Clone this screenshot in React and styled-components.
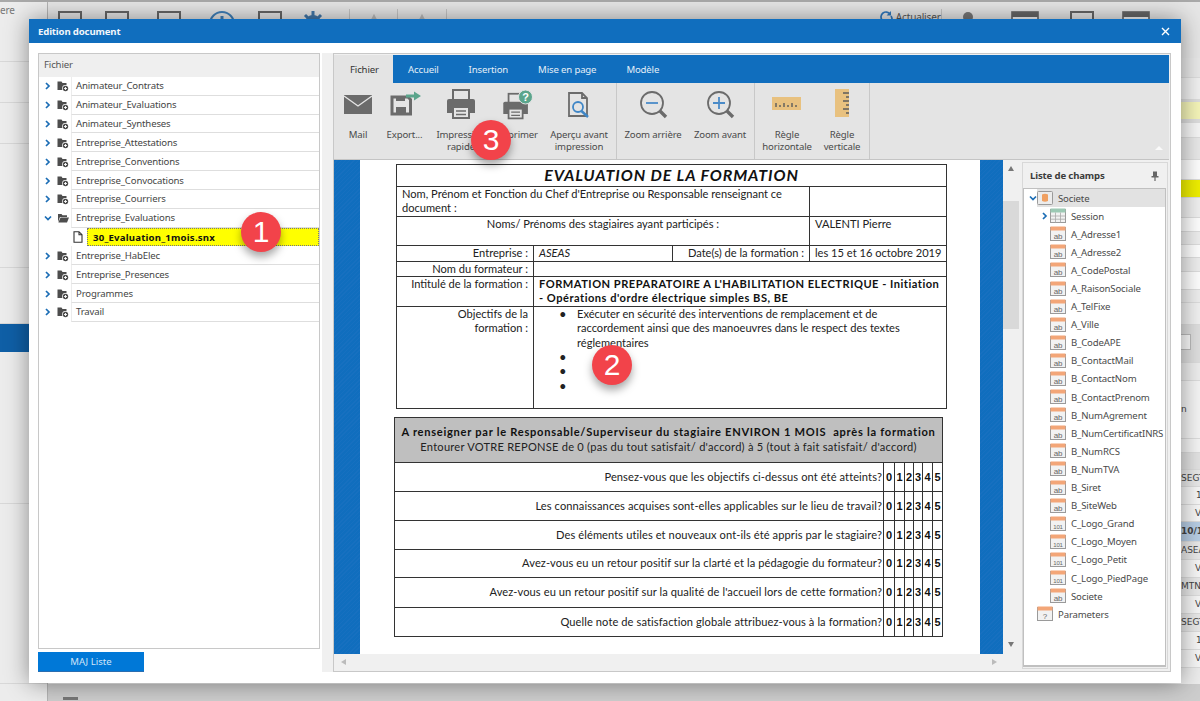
import React from "react"
import styled, { createGlobalStyle } from "styled-components"

const GlobalStyle = createGlobalStyle`
  html, body {
    margin: 0;
    padding: 0;
    background: #ececec;
    overflow: hidden;
  }
  * { box-sizing: border-box; }
`

const UI_FONT = `"Noto Sans", "Liberation Sans", sans-serif`
const DOC_FONT = `"Lato", "Open Sans", sans-serif`
const GREY = "#6b6b6b"

// ---- application behind the dialog
const Page = styled.div`
  position: relative;
  width: 1200px;
  height: 701px;
  overflow: hidden;
  background: #ececec;
  font-family: ${UI_FONT};
  font-size: 9.6px;
  letter-spacing: -0.15px;
  color: #444;
`
const TopLine = styled.div`
  height: 2px;
  background: #a9a9a9;
`
const Shell = styled.div`
  display: flex;
  height: 699px;
`
const SideBar = styled.div`
  width: 48px;
  flex-shrink: 0;
  border-right: 1px solid #b4b4b4;
  display: flex;
  flex-direction: column;
`
const SideRow = styled.div`
  height: ${p => p.$h}px;
  flex-shrink: 0;
  background: ${p => p.$bg || "transparent"};
  border-bottom: ${p => (p.$bg ? "0" : "1px solid #d8d8d8")};
  padding-top: 1px;
  color: #777;
  font-size: 10px;
`
const BackMain = styled.div`
  flex: 1;
  display: flex;
  flex-direction: column;
`
const TopTools = styled.div`
  height: 56px;
  flex-shrink: 0;
  display: flex;
  background: #e6e6e6;
  padding-top: 7px;
`
const ToolSlot = styled.div`
  width: ${p => p.$w}px;
  flex-shrink: 0;
  display: flex;
  justify-content: center;
  height: 30px;
  border-right: ${p => (p.$sep ? "1px solid #c4c4c4" : "0")};
  font-size: 10px;
  line-height: 16px;
  color: #555;
`
const Mid = styled.div`
  flex: 1;
  display: flex;
  justify-content: flex-end;
`
const RightRows = styled.div`
  width: 19px;
  display: flex;
  flex-direction: column;
  overflow: hidden;
`
const RightRow = styled.div`
  height: ${p => p.$h}px;
  flex-shrink: 0;
  background: ${p => p.$bg};
  border-bottom: 1px solid #dcdcdc;
  font-family: "DejaVu Sans", sans-serif;
  font-size: 9px;
  letter-spacing: 0;
  font-weight: ${p => (p.$bold ? 700 : 400)};
  color: #444;
  white-space: nowrap;
  padding-left: ${p => p.$pad || 0}px;
  line-height: ${p => p.$h - 1}px;
`
const InputBox = styled.div`
  width: 10px;
  height: 16px;
  margin-top: 9px;
  background: #fafafa;
  border: 1px solid #bbb;
  border-left: 0;
`
const BottomStrip = styled.div`
  height: 17px;
  flex-shrink: 0;
  background: #cdcdcd;
  padding: 13px 0 0 15px;
`
const BottomDash = styled.div`
  width: 15px;
  height: 3px;
  background: #777;
`

// ---- dialog
const Dialog = styled.div`
  position: absolute;
  left: 29px;
  top: 19px;
  width: 1152px;
  height: 664px;
  background: #fff;
  box-shadow: 0 0 22px rgba(0, 0, 0, 0.42);
  display: flex;
  flex-direction: column;
`
const TitleBar = styled.div`
  height: 24px;
  flex-shrink: 0;
  background: #106ebe;
  color: #f2f6fb;
  font-weight: 700;
  display: flex;
  align-items: center;
  justify-content: space-between;
  padding: 0 11px 0 9px;
`
const DialogBody = styled.div`
  flex: 1;
  display: flex;
  padding: 10px 10px 11px 9px;
`
const LeftCol = styled.div`
  width: 282px;
  flex-shrink: 0;
  display: flex;
  flex-direction: column;
  gap: 3px;
`
const FilePanel = styled.div`
  height: 596px;
  border: 1px solid #c8c8c8;
  display: flex;
  flex-direction: column;
`
const PanelHead = styled.div`
  height: 23px;
  flex-shrink: 0;
  background: #efefef;
  padding: 0 0 2px 5px;
  display: flex;
  align-items: center;
  color: #555;
`
const FileRow = styled.div`
  height: 18.83px;
  flex-shrink: 0;
  display: flex;
  align-items: center;
`
const Twist = styled.div`
  width: 18px;
  padding-left: 5px;
  display: flex;
  flex-shrink: 0;
`
const FolderSlot = styled.div`
  width: 14px;
  flex-shrink: 0;
  display: flex;
`
const RowLabel = styled.div`
  flex: 1;
  height: 100%;
  display: flex;
  align-items: center;
  padding-left: 4px;
  border-left: 1px solid #ececec;
  border-bottom: 1px solid #dedede;
  color: #454545;
`
const FileSlot = styled.div`
  width: 48px;
  padding-left: 34px;
  flex-shrink: 0;
  display: flex;
`
const SelectedLabel = styled.div`
  flex: 1;
  height: 100%;
  display: flex;
  align-items: center;
  padding-left: 5px;
  background: #ffff00;
  border: 1px dotted #777;
  color: #111;
  font-weight: 700;
  letter-spacing: 0.2px;
`
const SmallButton = styled.button`
  width: 106px;
  height: 20px;
  border: 0;
  border-bottom: 1px solid #2a6db0;
  background: #0078d7;
  color: #cfe4f7;
  font-family: ${UI_FONT};
  font-size: 9.6px;
  padding: 0;
`
const Splitter = styled.div`
  width: 11px;
  margin-left: 2px;
  flex-shrink: 0;
  background: #f0f0f0;
`
const Designer = styled.div`
  flex: 1;
  border: 1px solid #c8c8c8;
  padding-top: 1px;
  display: flex;
  flex-direction: column;
  background: #f0f0f0;
  min-width: 0;
`
const TabStrip = styled.div`
  height: 28px;
  flex-shrink: 0;
  background: #106ebe;
  display: flex;
  margin-right: 1px;
`
const Tab = styled.div`
  padding: 0 15px 0 ${p => (p.$active ? 16 : 15)}px;
  display: flex;
  align-items: center;
  background: ${p => (p.$active ? "#e4e4e4" : "transparent")};
  color: ${p => (p.$active ? "#333" : "#e4eef8")};
  width: ${p => p.$w}px;
`
const Ribbon = styled.div`
  position: relative;
  height: 77px;
  flex-shrink: 0;
  background: #e4e4e4;
  border-bottom: 1px solid #c4c4c4;
  display: flex;
  margin-right: 1px;
`
const RibbonGroup = styled.div`
  display: flex;
  padding: 0 ${p => p.$end || 0}px 0 ${p => p.$start || 0}px;
  border-right: 1px solid #c8c8c8;
`
const RibbonButton = styled.div`
  width: ${p => p.$w}px;
  margin-right: ${p => p.$mr || 0}px;
  display: flex;
  flex-direction: column;
  align-items: center;
  padding-top: 5px;
  text-align: center;
  line-height: 12px;
  color: #4a4a4a;
  white-space: nowrap;
  svg { margin-bottom: 5px; flex-shrink: 0; }
`
const Collapse = styled.div`
  position: absolute;
  right: 6px;
  bottom: 9px;
  width: 0;
  height: 0;
  border-left: 4px solid transparent;
  border-right: 4px solid transparent;
  border-bottom: 4px solid #fafafa;
`
const DesignerBody = styled.div`
  flex: 1;
  display: flex;
  min-height: 0;
`
const DocColumn = styled.div`
  width: 685px;
  flex-shrink: 0;
  display: flex;
  flex-direction: column;
`
const DocRow = styled.div`
  height: 494px;
  display: flex;
  overflow: hidden;
`
const Hatch = styled.div`
  width: ${p => p.$w}px;
  flex-shrink: 0;
  background: repeating-linear-gradient(135deg, #106ebe 0 2px, #1770c0 2px 3px);
`
const Sheet = styled.div`
  width: 620px;
  flex-shrink: 0;
  background: #fff;
  padding: 4px 0 0 36px;
  font-family: ${DOC_FONT};
  font-size: 11.1px;
  letter-spacing: 0;
  color: #222;
  overflow: hidden;
`
const VScroll = styled.div`
  width: 16px;
  flex-shrink: 0;
  background: #f0f0f0;
  position: relative;
  display: flex;
  flex-direction: column;
  align-items: center;
`
const ScrollArrow = styled.div`
  width: 0;
  height: 0;
  margin-top: ${p => p.$top || 0}px;
  border-left: 3px solid transparent;
  border-right: 3px solid transparent;
  border-bottom: ${p => (p.$down ? "0" : "5px solid #777")};
  border-top: ${p => (p.$down ? "5px solid #777" : "0")};
`
const ScrollThumb = styled.div`
  width: 16px;
  height: 128px;
  margin-top: 30px;
  background: #d9d9d9;
`
const HScroll = styled.div`
  height: 16px;
  background: #f0f0f0;
  display: flex;
  align-items: center;
  justify-content: space-between;
  padding: 0 22px 0 7px;
`
const SideArrow = styled.div`
  width: 0;
  height: 0;
  border-top: 3px solid transparent;
  border-bottom: 3px solid transparent;
  border-left: ${p => (p.$right ? "5px solid #bbb" : "0")};
  border-right: ${p => (p.$right ? "0" : "5px solid #bbb")};
`

// ---- the report sheet
const DocTable = styled.table`
  width: ${p => p.$w}px;
  margin: ${p => p.$m || 0};
  table-layout: fixed;
  border-collapse: collapse;
  border: 1px solid #333;
`
const Td = styled.td`
  height: ${p => p.$h}px;
  padding: ${p => (p.$pad === undefined ? "0 5px" : p.$pad)};
  border: 1px solid #333;
  vertical-align: ${p => p.$v || "top"};
  text-align: ${p => p.$a || "left"};
  font-style: ${p => (p.$i ? "italic" : "normal")};
  line-height: ${p => p.$lh || 14.4}px;
  background: ${p => p.$bg || "transparent"};
  white-space: ${p => (p.$nw ? "nowrap" : "normal")};
`
const DocTitle = styled(Td)`
  font-size: 16px;
  letter-spacing: 0.9px;
  font-weight: 700;
  font-style: italic;
  color: #111;
  text-align: center;
  vertical-align: middle;
`
const Spaced = styled.span`
  letter-spacing: ${p => p.$ls}px;
  font-weight: ${p => (p.$b ? 700 : 400)};
  color: ${p => (p.$b ? "#111" : "inherit")};
`
const Bullets = styled.ul`
  margin: 0;
  padding: 0 0 0 38px;
  list-style: none;
  li {
    position: relative;
    min-height: 14.4px;
  }
  li::before {
    content: "•";
    position: absolute;
    left: -18px;
    font-size: 13px;
  }
`
const Digit = styled(Td)`
  font-family: "Liberation Sans", sans-serif;
  font-weight: 700;
  font-size: 11px;
  color: #111;
  text-align: center;
  vertical-align: middle;
`

// ---- field list
const FieldPanel = styled.div`
  width: 146px;
  flex-shrink: 0;
  margin: 2px 0 2px 3px;
  border: 1px solid #d8d8d8;
  background: #f0f0f0;
  display: flex;
  flex-direction: column;
  padding: 0 1px 1px 0;
`
const FieldHead = styled.div`
  height: 25px;
  flex-shrink: 0;
  display: flex;
  align-items: center;
  justify-content: space-between;
  padding: 0 7px;
  font-weight: 700;
  color: #3c3c3c;
`
const FieldTree = styled.div`
  flex: 1;
  background: #fff;
  border: 1px solid #c0c0c0;
  border-width: 1px 1px 2px 1px;
`
const FieldRow = styled.div`
  height: 18.1px;
  display: flex;
  align-items: center;
  padding-left: ${p => p.$indent}px;
  background: ${p => (p.$sel ? "linear-gradient(90deg, #fff 13px, #e2e2e2 13px)" : "transparent")};
  color: #4a4a4a;
  gap: 5px;
  white-space: nowrap;
  position: relative;
`
const RowTwist = styled.span`
  position: absolute;
  left: ${p => p.$x}px;
  display: flex;
`

// ---- numbered callouts
const Callout = styled.div`
  position: absolute;
  left: ${p => p.$x - 20}px;
  top: ${p => p.$y - 20}px;
  width: 40px;
  height: 40px;
  border-radius: 50%;
  background: #f2434a;
  color: #fff;
  font-family: "Liberation Sans", sans-serif;
  font-size: 30px;
  letter-spacing: 0;
  display: flex;
  align-items: center;
  justify-content: center;
  box-shadow: 0 5px 8px rgba(0, 0, 0, 0.35);
`

const Chevron = ({ open }) => (
  <svg width="8" height="8" viewBox="0 0 8 8">
    <path d={open ? "M1 2.5 L4 5.5 L7 2.5" : "M2 1 L5 4 L2 7"} fill="none" stroke="#1b6db5" strokeWidth="1.7" />
  </svg>
)

const FolderPlus = () => (
  <svg width="12" height="12" viewBox="0 0 12 12">
    <path d="M0.5 1.5 H4.5 L5.5 3 H9.5 V10 H0.5 Z" fill="#4d4d4d" />
    <circle cx="8.5" cy="8.5" r="3.4" fill="#fff" />
    <circle cx="8.5" cy="8.5" r="2.7" fill="#4d4d4d" />
    <path d="M7 8.5 H10 M8.5 7 V10" stroke="#fff" strokeWidth="0.9" />
  </svg>
)

const FolderOpen = () => (
  <svg width="12" height="12" viewBox="0 0 12 12">
    <path d="M1 2 H4.5 L5.5 3.2 H10 V5 H3 L1 10 Z" fill="#4d4d4d" />
    <path d="M3.5 5.6 H12 L10 10.4 H1.4 Z" fill="#4d4d4d" />
  </svg>
)

const FileIcon = () => (
  <svg width="10" height="12" viewBox="0 0 10 12">
    <path d="M1 0.7 H6 L9 3.7 V11.3 H1 Z M6 0.7 V3.7 H9" fill="#fff" stroke="#333" strokeWidth="1.1" />
  </svg>
)

const MailIcon = () => (
  <svg width="36" height="36" viewBox="0 0 36 36">
    <rect x="4" y="7" width="28" height="19" fill={GREY} />
    <path d="M4 8 L18 18 L32 8" fill="none" stroke="#e4e4e4" strokeWidth="1.4" />
  </svg>
)

const ExportIcon = () => (
  <svg width="36" height="36" viewBox="0 0 36 36">
    <path d="M5 9 H21 L23.5 11.5 V26 H5 Z" fill="none" stroke={GREY} strokeWidth="3" />
    <rect x="9" y="19" width="10" height="8" fill={GREY} />
    <rect x="9" y="8" width="9" height="5" fill={GREY} />
    <path d="M19 6.5 H27 V3.5 L34 8 L27 12.5 V9.5 H19 Z" fill="#5ba58c" />
  </svg>
)

const Printer = () => (
  <g>
    <rect x="12" y="2" width="16" height="11" fill="none" stroke={GREY} strokeWidth="2" />
    <path d="M8 11 H32 Q34 11 34 13 V25 H6 V13 Q6 11 8 11 Z" fill={GREY} />
    <rect x="12" y="19" width="16" height="11" fill="#e4e4e4" stroke={GREY} strokeWidth="2" />
    <path d="M15 23 H25 M15 26.5 H25" stroke={GREY} strokeWidth="1.4" />
  </g>
)

const PrintIcon = () => (
  <svg width="36" height="36" viewBox="0 0 36 36">
    <g transform="translate(-2 0)"><Printer /></g>
  </svg>
)

const PrintHelpIcon = () => (
  <svg width="36" height="36" viewBox="0 0 36 36">
    <g transform="translate(-1 4) scale(0.88)"><Printer /></g>
    <circle cx="26.5" cy="9" r="7" fill="#5ba58c" stroke="#e4e4e4" />
    <text x="26.5" y="13" textAnchor="middle" fontFamily="Liberation Sans" fontWeight="700" fontSize="11" fill="#fff">?</text>
  </svg>
)

const PreviewIcon = () => (
  <svg width="36" height="36" viewBox="0 0 36 36">
    <path d="M8 5 H21 L26 10 V28 H8 Z M21 5 V10 H26" fill="none" stroke={GREY} strokeWidth="1.8" />
    <circle cx="17" cy="19" r="5" fill="#e4e4e4" stroke="#3f86c6" strokeWidth="1.8" />
    <path d="M20.5 23 L27 29" stroke="#3f86c6" strokeWidth="2.4" />
  </svg>
)

const ZoomIcon = ({ plus }) => (
  <svg width="36" height="36" viewBox="0 0 36 36">
    <circle cx="17" cy="15" r="11" fill="none" stroke={GREY} strokeWidth="1.8" />
    <path d="M25 23 L31 29" stroke={GREY} strokeWidth="3.4" />
    <path d={plus ? "M11 15 H23 M17 9 V21" : "M11 15 H23"} stroke="#4a8bc8" strokeWidth="1.8" />
  </svg>
)

const RulerH = () => (
  <svg width="36" height="36" viewBox="0 0 36 36">
    <rect x="3" y="9" width="29" height="13" fill="#e8c17f" />
    <path d="M7 19 V15 M11 19 V17 M15 19 V15 M19 19 V17 M23 19 V15 M27 19 V17" stroke="#5c5c5c" strokeWidth="1.4" />
  </svg>
)

const RulerV = () => (
  <svg width="36" height="36" viewBox="0 0 36 36">
    <rect x="11" y="1" width="14" height="28" fill="#e8c17f" />
    <path d="M19 5 H25 M22 9 H25 M19 13 H25 M22 17 H25 M19 21 H25 M22 25 H25" stroke="#5c5c5c" strokeWidth="1.4" />
  </svg>
)

const FieldIcon = ({ label }) => (
  <svg width="16" height="16" viewBox="0 0 16 16">
    <rect x="0.5" y="1.5" width="15" height="13" fill="#f2f2f2" stroke="#9a9a9a" />
    <rect x="0.5" y="0.5" width="15" height="4" fill="#f3a678" />
    <text x="8" y="12.5" textAnchor="middle" fontFamily="Liberation Sans" fontSize={label.length > 2 ? 6 : 8} fill="#666">{label}</text>
  </svg>
)

const TableIcon = () => (
  <svg width="16" height="16" viewBox="0 0 16 16">
    <rect x="0.5" y="1.5" width="15" height="13" fill="#f2f2f2" stroke="#9a9a9a" />
    <rect x="0.5" y="0.5" width="15" height="4" fill="#9cc9b4" />
    <path d="M0.5 8 H15.5 M0.5 11.2 H15.5 M5.5 4.5 V14.5 M10.5 4.5 V14.5" stroke="#a8a8a8" strokeWidth="0.8" />
  </svg>
)

const SourceIcon = () => (
  <svg width="16" height="16" viewBox="0 0 16 16">
    <rect x="0.5" y="1.5" width="15" height="13" rx="1" fill="#ececec" stroke="#9a9a9a" />
    <path d="M5 4.5 Q8 3 11 4.5 V11 Q8 12.5 5 11 Z" fill="#f0a062" />
  </svg>
)

const PinIcon = () => (
  <svg width="8" height="10" viewBox="0 0 8 10">
    <path d="M2 0.5 H6 V5 H7.5 V6.5 H4.6 V10 H3.4 V6.5 H0.5 V5 H2 Z" fill="#666" />
  </svg>
)

const TopGlyph = ({ kind }) => {
  if (kind === "round") {
    return (
      <svg width="28" height="30" viewBox="0 0 28 30">
        <circle cx="14" cy="15" r="12" fill="none" stroke="#3f7fb8" strokeWidth="2" />
        <rect x="12.5" y="7" width="3" height="3" fill="#3f7fb8" />
      </svg>
    )
  }
  if (kind === "gear") {
    return (
      <svg width="24" height="30" viewBox="0 0 24 30">
        <circle cx="12" cy="14" r="8" fill="#4277a8" />
        <path d="M12 2 V8 M4 6 L8 10 M20 6 L16 10 M1 14 H5 M19 14 H23" stroke="#4277a8" strokeWidth="3" />
      </svg>
    )
  }
  if (kind === "refresh") {
    return (
      <svg width="13" height="14" viewBox="0 0 13 14" style={{ marginTop: 2 }}>
        <path d="M2 9 A5 5 0 0 1 10 3 M11 5 A5 5 0 0 1 3 11" fill="none" stroke="#2f78bd" strokeWidth="1.7" />
        <path d="M11 0 V4.6 H6.6 Z" fill="#2f78bd" />
      </svg>
    )
  }
  if (kind === "person") {
    return (
      <svg width="20" height="30" viewBox="0 0 20 30">
        <circle cx="10" cy="8" r="5" fill="#777" />
        <path d="M1 22 Q10 6 19 22 Z" fill="#777" />
      </svg>
    )
  }
  if (kind === "fade") {
    return (
      <svg width="14" height="30" viewBox="0 0 14 30">
        <path d="M2 18 L7 8 L12 18" fill="none" stroke="#bbb" strokeWidth="3" />
      </svg>
    )
  }
  if (kind === "bar") {
    return (
      <svg width="28" height="30" viewBox="0 0 28 30">
        <rect x="1" y="3" width="26" height="26" fill="#f5f5f5" stroke="#666" strokeWidth="1.6" />
        <rect x="1" y="3" width="26" height="5" fill="#666" />
      </svg>
    )
  }
  return (
    <svg width="24" height="30" viewBox="0 0 24 30">
      <rect x="1" y="3" width="22" height="26" fill="none" stroke="#666" strokeWidth="2" />
    </svg>
  )
}

const topSlots = [
  { w: 43, kind: "box" },
  { w: 51, kind: "box" },
  { w: 54, kind: "box" },
  { w: 52, kind: "round" },
  { w: 44, kind: "box" },
  { w: 41, kind: "gear" },
  { w: 17, sep: true },
  { w: 48, kind: "fade", sep: true },
  { w: 49, kind: "fade", sep: true },
]
const topSlotsRight = [
  { w: 44, kind: "person" },
  { w: 70, kind: "bar" },
  { w: 44, kind: "box" },
  { w: 64, kind: "bar" },
]

const sideRows = [
  { h: 60, text: "ere" }, { h: 41 }, { h: 41 }, { h: 124 }, { h: 56 },
  { h: 28, bg: "#0f5fa6" }, { h: 152 }, { h: 180 },
]

const rightRows = [
  { h: 20, bg: "#e8e8e8" }, { h: 22, bg: "#f0f0f0" }, { h: 2, bg: "#ddd" }, { h: 18, bg: "#f4f4b8" },
  { h: 3, bg: "#ddd" }, { h: 15, bg: "#f5f5f5" }, { h: 22, bg: "#e8e8e8" }, { h: 20, bg: "#fdfdfd" },
  { h: 18, bg: "#eeee00" }, { h: 20, bg: "#efefef" }, { h: 14, bg: "#fdfdfd" }, { h: 13, bg: "#ededed" },
  { h: 13, bg: "#fdfdfd" }, { h: 14, bg: "#ededed" }, { h: 18, bg: "#fdfdfd" }, { h: 13, bg: "#ededed" },
  { h: 22, bg: "#f0f0f0" }, { h: 38, bg: "#dedede", box: true }, { h: 18, bg: "#ededed" },
  { h: 58, bg: "#f4f4f4", text: "n" }, { h: 14, bg: "#f4f4f4" }, { h: 17, bg: "#e2e2e2" }, { h: 17, bg: "#e8e8e8", text: "SEGT" },
  { h: 18, bg: "#f6f6f6", text: "1", pad: 15 }, { h: 17, bg: "#f6f6f6", text: "V", pad: 14 },
  { h: 20, bg: "#b7cde4", text: "10/1", bold: true }, { h: 18, bg: "#e8e8e8", text: "ASEA" },
  { h: 18, bg: "#f6f6f6", text: "V", pad: 14 }, { h: 18, bg: "#e8e8e8", text: "MTN" },
  { h: 18, bg: "#f6f6f6", text: "V", pad: 14 }, { h: 18, bg: "#e8e8e8", text: "SEGT" },
  { h: 18, bg: "#f6f6f6", text: "1", pad: 15 }, { h: 18, bg: "#f6f6f6", text: "V", pad: 14 },
]

const folders = [
  "Animateur_Contrats", "Animateur_Evaluations", "Animateur_Syntheses", "Entreprise_Attestations",
  "Entreprise_Conventions", "Entreprise_Convocations", "Entreprise_Courriers",
]
const foldersAfter = ["Entreprise_HabElec", "Entreprise_Presences", "Programmes", "Travail"]

const abFields = [
  "A_Adresse1", "A_Adresse2", "A_CodePostal", "A_RaisonSociale", "A_TelFixe", "A_Ville", "B_CodeAPE",
  "B_ContactMail", "B_ContactNom", "B_ContactPrenom", "B_NumAgrement", "B_NumCertificatINRS", "B_NumRCS",
  "B_NumTVA", "B_Siret", "B_SiteWeb",
]
const logoFields = ["C_Logo_Grand", "C_Logo_Moyen", "C_Logo_Petit", "C_Logo_PiedPage"]

const questions = [
  { q: "Pensez-vous que les objectifs ci-dessus ont été atteints?", h: 29 },
  { q: "Les connaissances acquises sont-elles applicables sur le lieu de travail?", h: 29 },
  { q: "Des éléments utiles et nouveaux ont-ils été appris par le stagiaire?", h: 29 },
  { q: "Avez-vous eu un retour positif sur la clarté et la pédagogie du formateur?", h: 28 },
  { q: "Avez-vous eu un retour positif sur la qualité de l'accueil lors de cette formation?", h: 30 },
  { q: "Quelle note de satisfaction globale attribuez-vous à la formation?", h: 29 },
]

const FolderRow = ({ name }) => (
  <FileRow>
    <Twist><Chevron /></Twist>
    <FolderSlot><FolderPlus /></FolderSlot>
    <RowLabel>{name}</RowLabel>
  </FileRow>
)

const App = () => (
  <Page>
    <GlobalStyle />
    <TopLine />
    <Shell>
      <SideBar>
        {sideRows.map((r, i) => (
          <SideRow key={i} $h={r.h} $bg={r.bg}>{r.text}</SideRow>
        ))}
      </SideBar>
      <BackMain>
        <TopTools>
          {topSlots.map((s, i) => (
            <ToolSlot key={i} $w={s.w} $sep={s.sep}>{s.kind && <TopGlyph kind={s.kind} />}</ToolSlot>
          ))}
          <ToolSlot $w={433} />
          <ToolSlot $w={62} $sep>
            <TopGlyph kind="refresh" />&nbsp;Actualiser
          </ToolSlot>
          <ToolSlot $w={4} />
          {topSlotsRight.map((s, i) => (
            <ToolSlot key={i} $w={s.w}><TopGlyph kind={s.kind} /></ToolSlot>
          ))}
        </TopTools>
        <Mid>
          <RightRows>
            {rightRows.map((r, i) => (
              <RightRow key={i} $h={r.h} $bg={r.bg} $pad={r.pad} $bold={r.bold}>
                {r.box ? <InputBox /> : r.text}
              </RightRow>
            ))}
          </RightRows>
        </Mid>
        <BottomStrip><BottomDash /></BottomStrip>
      </BackMain>
    </Shell>

    <Dialog>
      <TitleBar>
        Edition document
        <svg width="9" height="9" viewBox="0 0 9 9">
          <path d="M1 1 L8 8 M8 1 L1 8" stroke="#fff" strokeWidth="1.4" />
        </svg>
      </TitleBar>
      <DialogBody>
        <LeftCol>
          <FilePanel>
            <PanelHead>Fichier</PanelHead>
            {folders.map(f => <FolderRow key={f} name={f} />)}
            <FileRow>
              <Twist><Chevron open /></Twist>
              <FolderSlot><FolderOpen /></FolderSlot>
              <RowLabel>Entreprise_Evaluations</RowLabel>
            </FileRow>
            <FileRow>
              <FileSlot><FileIcon /></FileSlot>
              <SelectedLabel>30_Evaluation_1mois.snx</SelectedLabel>
            </FileRow>
            {foldersAfter.map(f => <FolderRow key={f} name={f} />)}
          </FilePanel>
          <SmallButton>MAJ Liste</SmallButton>
        </LeftCol>
        <Splitter />
        <Designer>
          <TabStrip>
            <Tab $active $w={59}>Fichier</Tab>
            <Tab>Accueil</Tab>
            <Tab>Insertion</Tab>
            <Tab>Mise en page</Tab>
            <Tab>Modèle</Tab>
          </TabStrip>
          <Ribbon>
            <RibbonGroup $start={1} $end={4}>
              <RibbonButton $w={46}><MailIcon />Mail</RibbonButton>
              <RibbonButton $w={47}><ExportIcon />Export...</RibbonButton>
              <RibbonButton $w={66}><PrintIcon />Impression<br />rapide</RibbonButton>
              <RibbonButton $w={46} $mr={6}><PrintHelpIcon />Imprimer</RibbonButton>
              <RibbonButton $w={66}><PreviewIcon />Aperçu avant<br />impression</RibbonButton>
            </RibbonGroup>
            <RibbonGroup $start={3}>
              <RibbonButton $w={66}><ZoomIcon />Zoom arrière</RibbonButton>
              <RibbonButton $w={68}><ZoomIcon plus />Zoom avant</RibbonButton>
            </RibbonGroup>
            <RibbonGroup $end={4}>
              <RibbonButton $w={64}><RulerH />Règle<br />horizontale</RibbonButton>
              <RibbonButton $w={46}><RulerV />Règle<br />verticale</RibbonButton>
            </RibbonGroup>
            <Collapse />
          </Ribbon>
          <DesignerBody>
            <DocColumn>
              <DocRow>
                <Hatch $w={26} />
                <Sheet>
                  <DocTable $w={550}>
                    <colgroup>
                      <col style={{ width: 137 }} />
                      <col style={{ width: 139 }} />
                      <col style={{ width: 137 }} />
                      <col style={{ width: 137 }} />
                    </colgroup>
                    <tbody>
                      <tr><DocTitle colSpan={4} $h={22}>EVALUATION DE LA FORMATION</DocTitle></tr>
                      <tr>
                        <Td colSpan={3} $h={29}>Nom, Prénom et Fonction du Chef d'Entreprise ou Responsable renseignant ce document :</Td>
                        <Td />
                      </tr>
                      <tr>
                        <Td colSpan={3} $h={29} $a="center">Noms/ Prénoms des stagiaires ayant participés :</Td>
                        <Td>VALENTI Pierre</Td>
                      </tr>
                      <tr>
                        <Td $h={16} $lh={14} $a="right">Entreprise :</Td>
                        <Td $lh={14} $i>ASEAS</Td>
                        <Td $lh={14} $a="right">Date(s) de la formation :</Td>
                        <Td $lh={14} $nw>les 15 et 16 octobre 2019</Td>
                      </tr>
                      <tr>
                        <Td $h={15} $lh={13} $a="right">Nom du formateur :</Td>
                        <Td colSpan={3} />
                      </tr>
                      <tr>
                        <Td $h={30} $a="right">Intitulé de la formation :</Td>
                        <Td colSpan={3} $nw>
                          <Spaced $ls={0.5} $b>FORMATION PREPARATOIRE A L'HABILITATION ELECTRIQUE - Initiation</Spaced>
                          <br />
                          <Spaced $ls={0.5} $b>- Opérations d'ordre électrique simples BS, BE</Spaced>
                        </Td>
                      </tr>
                      <tr>
                        <Td $h={102} $a="right">Objectifs de la<br />formation :</Td>
                        <Td colSpan={3} $nw>
                          <Bullets>
                            <li>Exécuter en sécurité des interventions de remplacement et de<br />raccordement ainsi que des manoeuvres dans le respect des textes<br />réglementaires</li>
                            <li />
                            <li />
                            <li />
                          </Bullets>
                        </Td>
                      </tr>
                    </tbody>
                  </DocTable>
                  <DocTable $w={549} $m="8px 0 0 -2px">
                    <colgroup>
                      <col />
                      <col style={{ width: 11 }} />
                      <col style={{ width: 10 }} />
                      <col style={{ width: 9 }} />
                      <col style={{ width: 9 }} />
                      <col style={{ width: 10 }} />
                      <col style={{ width: 10 }} />
                    </colgroup>
                    <tbody>
                      <tr>
                        <Td colSpan={7} $h={45} $a="center" $v="middle" $bg="#bfbfbf" $pad="0" $nw>
                          <Spaced $ls={0.73} $b>A renseigner par le Responsable/Superviseur du stagiaire ENVIRON 1 MOIS&nbsp; après la formation</Spaced>
                          <br />
                          <Spaced $ls={0.24}>Entourer VOTRE REPONSE de 0 (pas du tout satisfait/ d'accord) à 5 (tout à fait satisfait/ d'accord)</Spaced>
                        </Td>
                      </tr>
                      {questions.map(({ q, h }) => (
                        <tr key={q}>
                          <Td $h={h} $a="right" $v="middle" $pad="0 1px 0 0" $nw><Spaced $ls={0.09}>{q}</Spaced></Td>
                          {[0, 1, 2, 3, 4, 5].map(n => <Digit key={n} $pad="0">{n}</Digit>)}
                        </tr>
                      ))}
                    </tbody>
                  </DocTable>
                </Sheet>
                <Hatch $w={23} />
                <VScroll>
                  <ScrollArrow $top={6} />
                  <ScrollThumb />
                  <ScrollArrow $down $top={313} />
                </VScroll>
              </DocRow>
              <HScroll>
                <SideArrow />
                <SideArrow $right />
              </HScroll>
            </DocColumn>
            <FieldPanel>
              <FieldHead>Liste de champs <PinIcon /></FieldHead>
              <FieldTree>
                <FieldRow $indent={13} $sel>
                  <RowTwist $x={5}><Chevron open /></RowTwist>
                  <SourceIcon />Societe
                </FieldRow>
                <FieldRow $indent={26}>
                  <RowTwist $x={17}><Chevron /></RowTwist>
                  <TableIcon />Session
                </FieldRow>
                {abFields.map(f => (
                  <FieldRow key={f} $indent={26}><FieldIcon label="ab" />{f}</FieldRow>
                ))}
                {logoFields.map(f => (
                  <FieldRow key={f} $indent={26}><FieldIcon label="101" />{f}</FieldRow>
                ))}
                <FieldRow $indent={26}><FieldIcon label="ab" />Societe</FieldRow>
                <FieldRow $indent={13}><FieldIcon label="?" />Parameters</FieldRow>
              </FieldTree>
            </FieldPanel>
          </DesignerBody>
        </Designer>
      </DialogBody>
    </Dialog>

    <Callout $x={261} $y={232}>1</Callout>
    <Callout $x={612} $y={365}>2</Callout>
    <Callout $x={491} $y={140}>3</Callout>
  </Page>
)

export default App
